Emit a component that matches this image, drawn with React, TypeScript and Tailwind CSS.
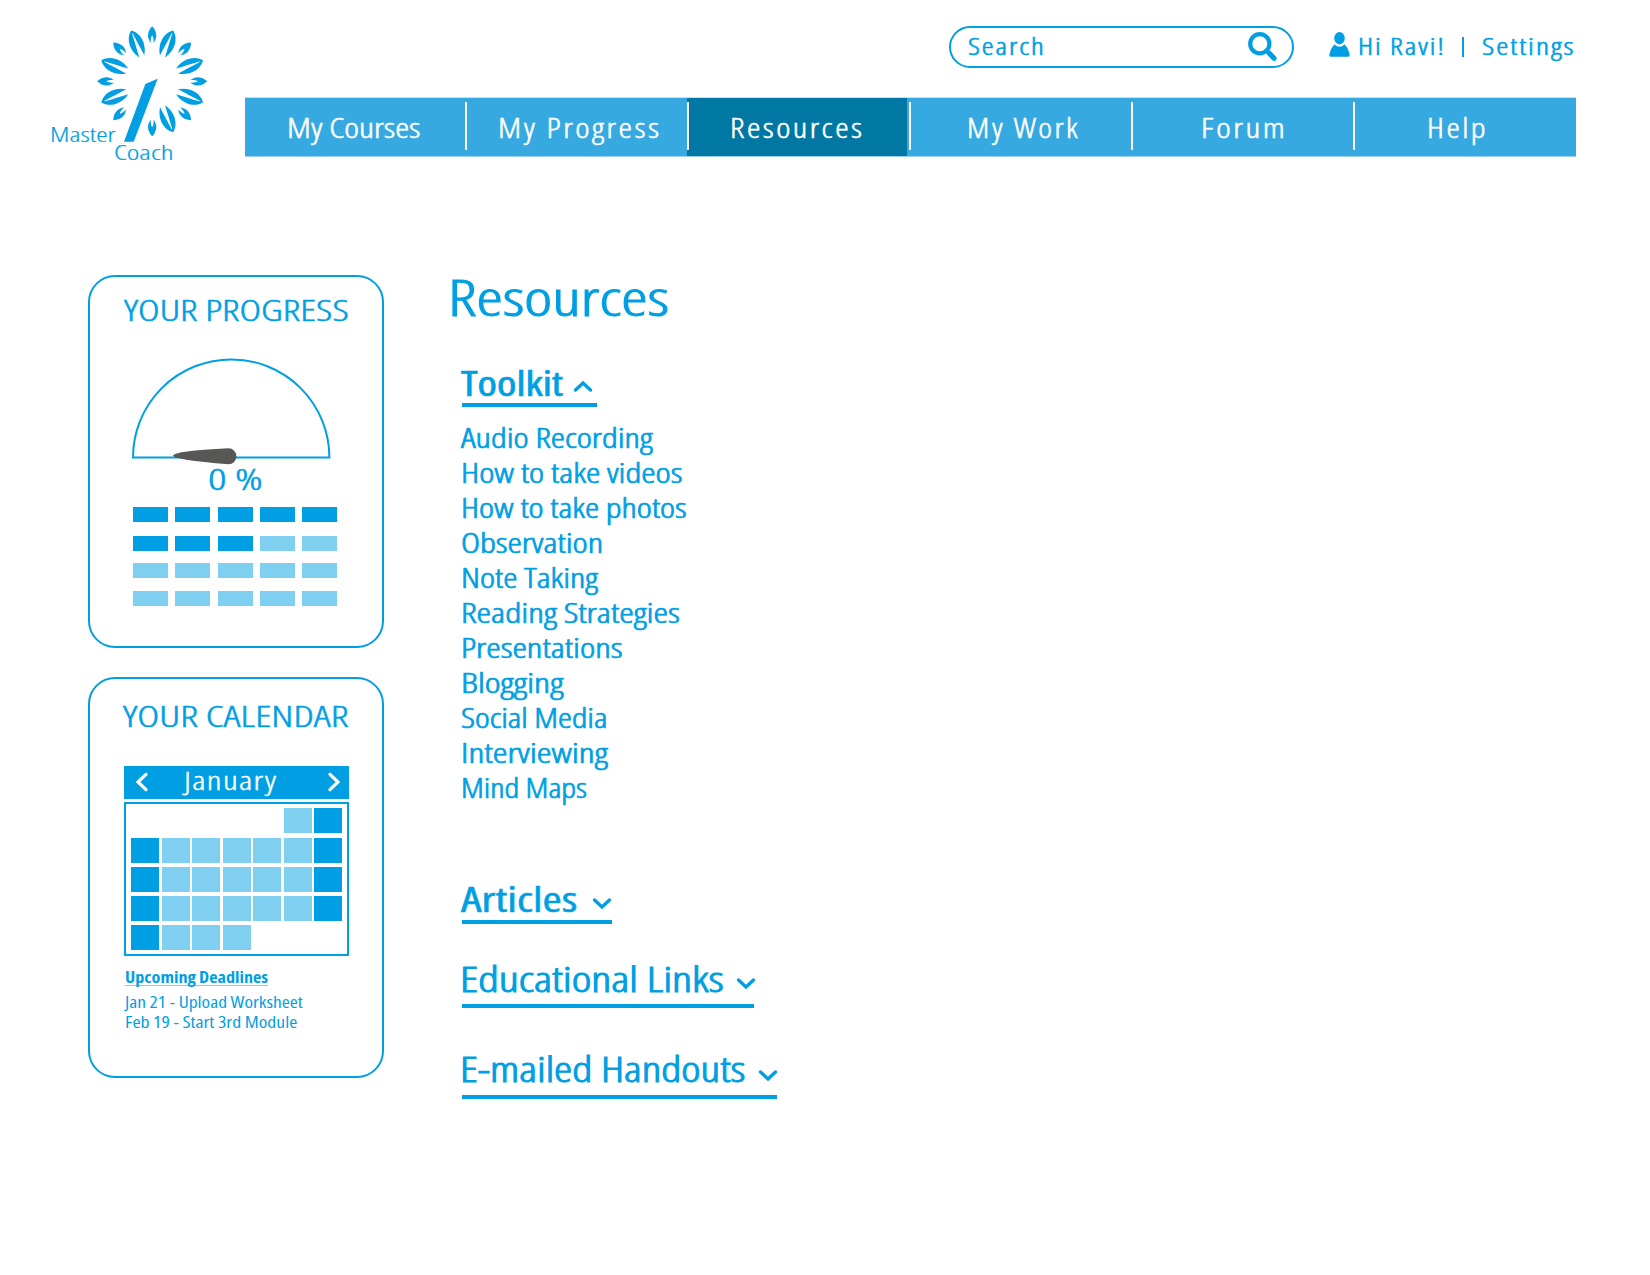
import { useLayoutEffect, useRef, useState } from "react";

/** A line of text that is condensed or expanded to fill the width of its box. */
function Fit({ className, children }: { className: string; children: string }) {
  const box = useRef<HTMLSpanElement>(null);
  const text = useRef<HTMLSpanElement>(null);
  const [scale, setScale] = useState(1);
  useLayoutEffect(() => {
    if (box.current && text.current) {
      setScale(box.current.offsetWidth / text.current.offsetWidth);
    }
  }, []);
  return (
    <span ref={box} className={"block shrink-0 " + className}>
      <span
        ref={text}
        className="inline-block origin-left whitespace-nowrap align-top"
        style={{ transform: `scaleX(${scale})` }}
      >
        {children}
      </span>
    </span>
  );
}

const BIG_LEAF =
  "M0,-165 C-24,-148 -28,-110 -8,-81 C-6,-104 -3.500,-130 -1,-154 L0,-157 L1,-154 C3.500,-130 6,-104 8,-81 C28,-110 24,-148 0,-165Z";
const SMALL_LEAF =
  "M0,-165 C-9,-156 -13,-145 -12.500,-135 C-11.500,-126 -8,-120 -4,-115 C-5,-124 -4,-131 0,-138 C4,-131 5,-124 4,-115 C8,-120 11.500,-126 12.500,-135 C13,-145 9,-156 0,-165Z";

function Logo() {
  return (
    <div className="relative h-[172px] w-[245px] shrink-0">
      <svg className="ml-[40px] mt-[15px] h-[130px] w-[200px]" viewBox="0 0 600 390" fill="#009fe3">
        <g transform="translate(336.5 199)">
          {[22.5, 67.5, 112.5, 157.5, 247.5, 292.5, 337.5].map((a) => (
            <path key={a} d={BIG_LEAF} transform={`rotate(${a})`} />
          ))}
          {[0, 45, 90, 135, 180, 225, 270, 315].map((a) => (
            <path key={a} d={SMALL_LEAF} transform={`rotate(${a})`} />
          ))}
        </g>
        <path d="M316,207 L353,191 L281,380 L252,380Z" />
      </svg>
      <div className="absolute left-[50px] top-[123px] text-[20px] font-light leading-[24px] [-webkit-text-stroke:0.2px]">
        <Fit className="w-[66px]">Master</Fit>
      </div>
      <div className="absolute left-[114px] top-[141px] text-[20px] font-light leading-[24px] [-webkit-text-stroke:0.2px]">
        <Fit className="w-[60px]">Coach</Fit>
      </div>
    </div>
  );
}

const NAV = [
  { label: "My Courses", text: "ml-[42px] w-[133px]" },
  { label: "My Progress", text: "ml-[31px] w-[163px] tracking-[2px]" },
  { label: "Resources", text: "ml-[41px] w-[134px] tracking-[2px]", active: true },
  { label: "My Work", text: "ml-[56px] w-[113px] tracking-[2px]" },
  { label: "Forum", text: "ml-[68px] w-[86px] tracking-[2px]" },
  { label: "Help", text: "ml-[72px] w-[61px] tracking-[2px]" },
];

function Header() {
  return (
    <header className="flex h-[172px]">
      <Logo />
      <div className="flex w-[1331px] flex-col">
        <div className="flex h-[97px] pl-[704px] pt-[26px]">
          <div className="flex h-[42px] w-[345px] shrink-0 rounded-full border-2 border-[#009fe3] pl-[17px]">
            <Fit className="mt-[1px] w-[78px] text-[23px] font-light leading-[34px] tracking-[1.5px] [-webkit-text-stroke:0.6px]">
              Search
            </Fit>
            <svg className="ml-[202px] mt-[4px] h-[30px] w-[30px]" viewBox="0 0 30 30" fill="none" stroke="#009fe3">
              <ellipse cx="11.8" cy="11.8" rx="9.600" ry="9.600" strokeWidth="4.200" />
              <path d="M18.500 18.500 L21 21" strokeWidth="4" />
              <path d="M21.300 21.300 L26 26.300" strokeWidth="5.200" strokeLinecap="round" />
            </svg>
          </div>
          <svg className="ml-[35px] mt-[6px] h-[25px] w-[21px] shrink-0" viewBox="0 0 21 25" fill="#009fe3">
            <ellipse cx="10.5" cy="6.2" rx="5.2" ry="6.2" />
            <path d="M5.500 12.500 Q10.500 17 15.500 12.500 Q18.500 14.500 20.700 22.500 Q21 24.700 19 24.700 H2 Q0 24.700 0.300 22.500 Q2.500 14.500 5.500 12.500Z" />
          </svg>
          <div className="mt-[3px] flex text-[23px] font-light leading-[34px] [-webkit-text-stroke:0.6px]">
            <Fit className="ml-[8px] w-[87px] tracking-[1.500px]">Hi Ravi!</Fit>
            <div className="ml-[17px] mt-[8px] h-[20px] w-[2px] bg-[#009fe3]" />
            <Fit className="ml-[18px] w-[93px] tracking-[1.500px]">Settings</Fit>
          </div>
        </div>
        <nav className="flex h-[60px] border-b border-t border-b-[#9bd2f0] border-t-[#bfe3f5] bg-[#36a9e1] text-[27px] font-light leading-[36px] text-white [-webkit-text-stroke:0.5px]">
          {NAV.map((item, i) => (
            <div key={item.label} className={i === 0 ? "w-[220px] shrink-0" : i === 5 ? "w-[221px] shrink-0" : "w-[222px] shrink-0"}>
              <div className={item.active ? "flex h-full w-[220px] bg-[#0078a3]" : "flex h-full"}>
                {i > 0 && <div className="mt-[4px] h-[48px] w-[2px] shrink-0 bg-white" />}
                <Fit className={"mt-[12px] " + item.text}>{item.label}</Fit>
              </div>
            </div>
          ))}
        </nav>
      </div>
    </header>
  );
}

function ProgressCard() {
  const rows = [
    { filled: 5, gap: "mt-[17px]" },
    { filled: 3, gap: "mt-[14px]" },
    { filled: 0, gap: "mt-[12px]" },
    { filled: 0, gap: "mt-[13px]" },
  ];
  return (
    <section className="h-[373px] w-[296px] rounded-[27px] border-2 border-[#009fe3]">
      <Fit className="ml-[34px] mt-[13px] w-[225px] text-[29.500px] font-light leading-[40px] [-webkit-text-stroke:0.5px]">
        YOUR PROGRESS
      </Fit>
      <svg className="ml-[41px] mt-[26px] h-[110px] w-[204px]" viewBox="131 355.700 204 110">
        <path d="M133 457.300 A98.200 98.200 0 0 1 329.400 457.300 Z" fill="none" stroke="#009fe3" strokeWidth="2" />
        <path d="M173 455.500 Q174 450.500 228.500 448 A8 8 0 0 1 228.500 464 Q174 459.500 173 455.500Z" fill="#575756" />
      </svg>
      <Fit className="-mt-[7px] ml-[118px] w-[55px] text-[29px] font-light leading-[40px] [-webkit-text-stroke:0.5px]">0 %</Fit>
      <div className="-mt-[9px] pl-[43px]">
        {rows.map((row, r) => (
          <div key={r} className={"flex gap-[7.333px] " + row.gap}>
            {[0, 1, 2, 3, 4].map((c) => (
              <div key={c} className={c < row.filled ? "h-[15px] w-[35px] bg-[#009fe3]" : "h-[15px] w-[35px] bg-[#7fcff1]"} />
            ))}
          </div>
        ))}
      </div>
    </section>
  );
}

const WEEKS = [".....xX", "XxxxxxX", "XxxxxxX", "XxxxxxX", "Xxxx..."];

function CalendarCard() {
  return (
    <section className="mt-[29px] h-[401px] w-[296px] rounded-[27px] border-2 border-[#009fe3]">
      <Fit className="ml-[33px] mt-[17px] w-[225px] text-[29.500px] font-light leading-[40px] [-webkit-text-stroke:0.5px]">
        YOUR CALENDAR
      </Fit>
      <div className="ml-[34px] mt-[30px] flex h-[33px] w-[225px] bg-[#009fe3] text-white">
        <svg className="ml-[11px] mt-[6px] h-[20px] w-[13px]" viewBox="0 0 13 20" fill="none" stroke="white" strokeWidth="3.200">
          <path d="M11 2.300 L3 10 L11 17.700" strokeLinecap="round" />
        </svg>
        <Fit className="-mt-[3px] ml-[36px] w-[93px] text-[26px] font-light leading-[34px] tracking-[1px] [-webkit-text-stroke:0.4px]">
          January
        </Fit>
        <svg className="ml-[51px] mt-[6px] h-[20px] w-[13px]" viewBox="0 0 13 20" fill="none" stroke="white" strokeWidth="3.200">
          <path d="M2 2.300 L10 10 L2 17.700" strokeLinecap="round" />
        </svg>
      </div>
      <div className="ml-[34px] mt-[3px] flex h-[154px] w-[225px] flex-col gap-[4px] border-2 border-[#009fe3] pl-[5px] pt-[4px]">
        {WEEKS.map((week, w) => (
          <div key={w} className={w === 1 ? "mt-px flex gap-[2.500px]" : "flex gap-[2.500px]"}>
            {week.split("").map((day, d) => (
              <div
                key={d}
                className={
                  day === "X"
                    ? "h-[25px] w-[28px] shrink-0 bg-[#009fe3]"
                    : day === "x"
                      ? "h-[25px] w-[28px] shrink-0 bg-[#7fcff1]"
                      : "h-[25px] w-[28px] shrink-0"
                }
              />
            ))}
          </div>
        ))}
      </div>
      <div className="ml-[35px] mt-[11px] text-[15.500px] leading-[20px]">
        <div className="h-[19px] w-[143px] border-b border-[#7fcff1] font-bold">
          <Fit className="w-[143px]">Upcoming Deadlines</Fit>
        </div>
        <Fit className="mt-[6px] w-[178px]">Jan 21 - Upload Worksheet</Fit>
        <Fit className="w-[172px]">Feb 19 - Start 3rd Module</Fit>
      </div>
    </section>
  );
}

function Chevron({ up = false, className }: { up?: boolean; className: string }) {
  return (
    <svg className={"h-[13px] w-[20px] shrink-0 " + className} viewBox="0 0 20 13" fill="none" stroke="#009fe3" strokeWidth="3.400">
      <path d={up ? "M2.500 10 L10 3 L17.500 10" : "M2.500 3 L10 10 L17.500 3"} strokeLinecap="round" />
    </svg>
  );
}

const TOOLKIT = [
  { label: "Audio Recording", width: "w-[191px]" },
  { label: "How to take videos", width: "w-[221px]" },
  { label: "How to take photos", width: "w-[226px]" },
  { label: "Observation", width: "w-[142px]" },
  { label: "Note Taking", width: "w-[137px]" },
  { label: "Reading Strategies", width: "w-[219px]" },
  { label: "Presentations", width: "w-[161px]" },
  { label: "Blogging", width: "w-[102px]" },
  { label: "Social Media", width: "w-[147px]" },
  { label: "Interviewing", width: "w-[146px]" },
  { label: "Mind Maps", width: "w-[126px]" },
];

function Resources() {
  return (
    <main className="ml-[64px]">
      <Fit className="-mt-[8px] w-[221px] text-[49px] font-light leading-[60px] [-webkit-text-stroke:1px]">Resources</Fit>
      <div className="ml-[14px]">
        <div className="mt-[38px] flex h-[42px] w-[135px] border-b-[4px] border-[#009fe3] text-[35px] leading-[44px] [-webkit-text-stroke:0.7px]">
          <Fit className="-ml-px -mt-[4px] w-[102px]">Toolkit</Fit>
          <Chevron up className="ml-[10px] mt-[15px]" />
        </div>
        <ul className="-ml-[1px] mt-[13px] text-[27px] font-light leading-[35px] [-webkit-text-stroke:0.7px]">
          {TOOLKIT.map((item) => (
            <li key={item.label}>
              <Fit className={item.width}>{item.label}</Fit>
            </li>
          ))}
        </ul>
        <div className="mt-[72px] flex h-[47px] w-[150px] border-b-[4px] border-[#009fe3] text-[35px] leading-[44px] [-webkit-text-stroke:0.5px]">
          <Fit className="-ml-px w-[117px]">Articles</Fit>
          <Chevron className="ml-[14px] mt-[20px]" />
        </div>
        <div className="mt-[33px] flex h-[51px] w-[292px] border-b-[4px] border-[#009fe3] text-[35px] font-light leading-[44px] [-webkit-text-stroke:1px]">
          <Fit className="-ml-[2px] w-[264px]">Educational Links</Fit>
          <Chevron className="ml-[12px] mt-[20px]" />
        </div>
        <div className="mt-[39px] flex h-[52px] w-[315px] border-b-[4px] border-[#009fe3] text-[35px] font-light leading-[44px] [-webkit-text-stroke:1px]">
          <Fit className="-ml-[2px] w-[286px]">E-mailed Handouts</Fit>
          <Chevron className="ml-[12px] mt-[22px]" />
        </div>
      </div>
    </main>
  );
}

export default function App() {
  return (
    <div className="h-[1275px] w-[1650px] overflow-hidden bg-white font-['Open_Sans','Noto_Sans',sans-serif] text-[#009fe3] [font-stretch:80%]">
      <Header />
      <div className="flex pl-[88px] pt-[103px]">
        <aside>
          <ProgressCard />
          <CalendarCard />
        </aside>
        <Resources />
      </div>
    </div>
  );
}
